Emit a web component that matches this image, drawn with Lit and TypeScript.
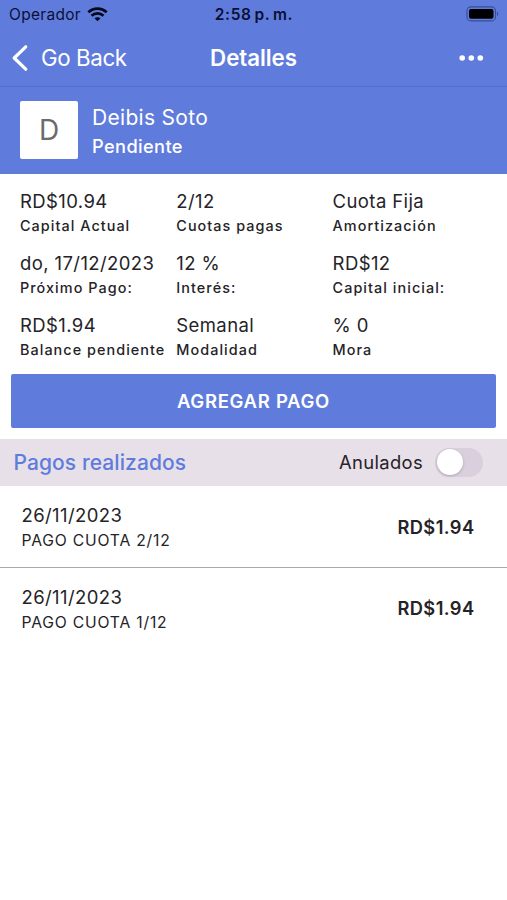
import { LitElement, html, css } from "lit";
import { customElement } from "lit/decorators.js";

const DETAILS = [
  ["RD$10.94", "Capital Actual"],
  ["2/12", "Cuotas pagas"],
  ["Cuota Fija", "Amortización"],
  ["do, 17/12/2023", "Próximo Pago:"],
  ["12 %", "Interés:"],
  ["RD$12", "Capital inicial:"],
  ["RD$1.94", "Balance pendiente"],
  ["Semanal", "Modalidad"],
  ["% 0", "Mora"],
];

const PAYMENTS = [
  { date: "26/11/2023", note: "PAGO CUOTA 2/12", amount: "RD$1.94" },
  { date: "26/11/2023", note: "PAGO CUOTA 1/12", amount: "RD$1.94" },
];

@customElement("app-root")
export class AppRoot extends LitElement {
  static styles = css`
    :host {
      display: block;
      height: 900px;
      overflow: hidden;
      background: #fff;
      color: #252327;
      font-family: Inter, "Liberation Sans", sans-serif;
      white-space: nowrap;
    }
    .bar, .client { background: #5f7cdd; color: #fff; }
    .bar { height: 86px; border-bottom: 1px solid #5570c9; }
    .status, .nav {
      display: grid;
      grid-template-columns: 1fr auto 1fr;
      align-items: center;
    }
    .status { height: 29px; color: #0b1034; padding: 0 8px 0 9px; }
    .carrier { display: flex; align-items: center; gap: 6px; font-size: 15.5px; letter-spacing: 0.3px; }
    .time { font-size: 15.5px; font-weight: 600; letter-spacing: 0.65px; word-spacing: -1.7px; }
    .battery { justify-self: end; display: block; margin-top: -2px; }
    .nav { height: 57px; padding: 0 12px; }
    .back { display: flex; align-items: center; gap: 13px; font-size: 22.3px; letter-spacing: -0.4px; }
    .title { font-size: 22.3px; font-weight: 600; letter-spacing: -0.05px; }
    .more { justify-self: end; display: block; margin-right: 11px; }
    .client { display: flex; height: 86.5px; padding-left: 20px; align-items: center; gap: 14px; }
    .avatar {
      width: 58px; height: 58px; border-radius: 2px; background: #fff; color: #6b6b6b;
      display: flex; align-items: center; justify-content: center; font-size: 28px; font-weight: 400;
    }
    .who { padding-top: 4px; }
    .name { font-size: 21px; line-height: 29px; letter-spacing: 0.3px; }
    .state { font-size: 18.2px; line-height: 29px; font-weight: 500; letter-spacing: 0.4px; }
    .details {
      display: grid;
      grid-template-columns: repeat(3, 156.3px);
      grid-auto-rows: 62.2px;
      padding: 15px 0 0 20px;
      height: 185.5px;
    }
    .value { font-size: 18.5px; line-height: 25px; letter-spacing: 0.4px; }
    .label { font-size: 14.4px; line-height: 24px; font-weight: 500; letter-spacing: 1.05px; }
    .add {
      display: flex; align-items: center; justify-content: center;
      margin: 0 10.6px 0 10.5px; height: 53.5px; border-radius: 2px;
      background: #5f7cdd; color: #fff; font-size: 18.5px; font-weight: 600; letter-spacing: 0.7px;
    }
    .section {
      display: flex; align-items: center; margin-top: 11px; height: 47.5px;
      padding: 0 24px 0 13.5px; background: #e8e0e9;
    }
    .heading { flex: 1; font-size: 21px; color: #5f7cdd; font-weight: 500; letter-spacing: 0.08px; }
    .filter { font-size: 18.4px; letter-spacing: 0.35px; margin-right: 12px; }
    .switch { width: 48px; height: 29px; border-radius: 15px; background: #d9cfdd; display: flex; align-items: center; }
    .knob { width: 26px; height: 26px; margin-left: 1.5px; border-radius: 50%; background: #fff; box-shadow: 0 1px 3px #0003; }
    .payment {
      display: flex; align-items: center; justify-content: space-between;
      height: 81px; box-sizing: border-box; padding: 0 32.5px 0 21.5px;
    }
    .payment + .payment { border-top: 1px solid #a9a9a9; }
    .entry { padding-top: 3px; }
    .date { font-size: 18.5px; line-height: 25px; letter-spacing: 0.4px; }
    .note { font-size: 15.7px; line-height: 25px; letter-spacing: 0.8px; }
    .amount { font-size: 18.3px; font-weight: 600; letter-spacing: 0.4px; }
  `;

  render() {
    return html`
      <header class="bar">
        <div class="status">
          <span class="carrier">Operador
            <svg width="21" height="15" viewBox="0 0 21 15" fill="none" stroke="#05081c" stroke-width="2.7">
              <path d="M1.3 5.3C6.6 0.3 14.4 0.3 19.7 5.3" />
              <path d="M4.5 8.7C8 5.5 13 5.5 16.5 8.7" />
              <path d="M10.5 14.3L7.5 11.3C9.2 9.8 11.8 9.8 13.5 11.3Z" fill="#05081c" stroke="none" />
            </svg>
          </span>
          <span class="time">2:58 p. m.</span>
          <svg class="battery" width="33" height="16" viewBox="0 0 33 16">
            <rect x="0.9" y="0.9" width="28.6" height="14" rx="4" fill="none" stroke="#3b4d8e" stroke-width="1.1" />
            <rect x="3" y="3" width="24.5" height="9.8" rx="2" fill="#000" />
            <path d="M31 5.5C32.7 6.3 32.7 9.3 31 10.1Z" fill="#3b4d8e" />
          </svg>
        </div>
        <nav class="nav">
          <span class="back">
            <svg width="16" height="26" viewBox="0 0 16 26" fill="none" stroke="#fff" stroke-width="3.2" stroke-linecap="round" stroke-linejoin="round">
              <path d="M13.7 1.8L2.2 13L13.7 24.2" />
            </svg>
            Go Back
          </span>
          <span class="title">Detalles</span>
          <svg class="more" width="25" height="6" viewBox="0 0 25 6" fill="#fff">
            <circle cx="3.2" cy="3" r="2.8" /><circle cx="12.3" cy="3" r="2.8" /><circle cx="21.3" cy="3" r="2.8" />
          </svg>
        </nav>
      </header>
      <section class="client">
        <div class="avatar">D</div>
        <div class="who">
          <div class="name">Deibis Soto</div>
          <div class="state">Pendiente</div>
        </div>
      </section>
      <section class="details">
        ${DETAILS.map(([value, label]) => html`
          <div>
            <div class="value">${value}</div>
            <div class="label">${label}</div>
          </div>`)}
      </section>
      <div class="add">AGREGAR PAGO</div>
      <div class="section">
        <span class="heading">Pagos realizados</span>
        <span class="filter">Anulados</span>
        <span class="switch"><span class="knob"></span></span>
      </div>
      ${PAYMENTS.map((p) => html`
        <div class="payment">
          <div class="entry">
            <div class="date">${p.date}</div>
            <div class="note">${p.note}</div>
          </div>
          <div class="amount">${p.amount}</div>
        </div>`)}
    `;
  }
}
